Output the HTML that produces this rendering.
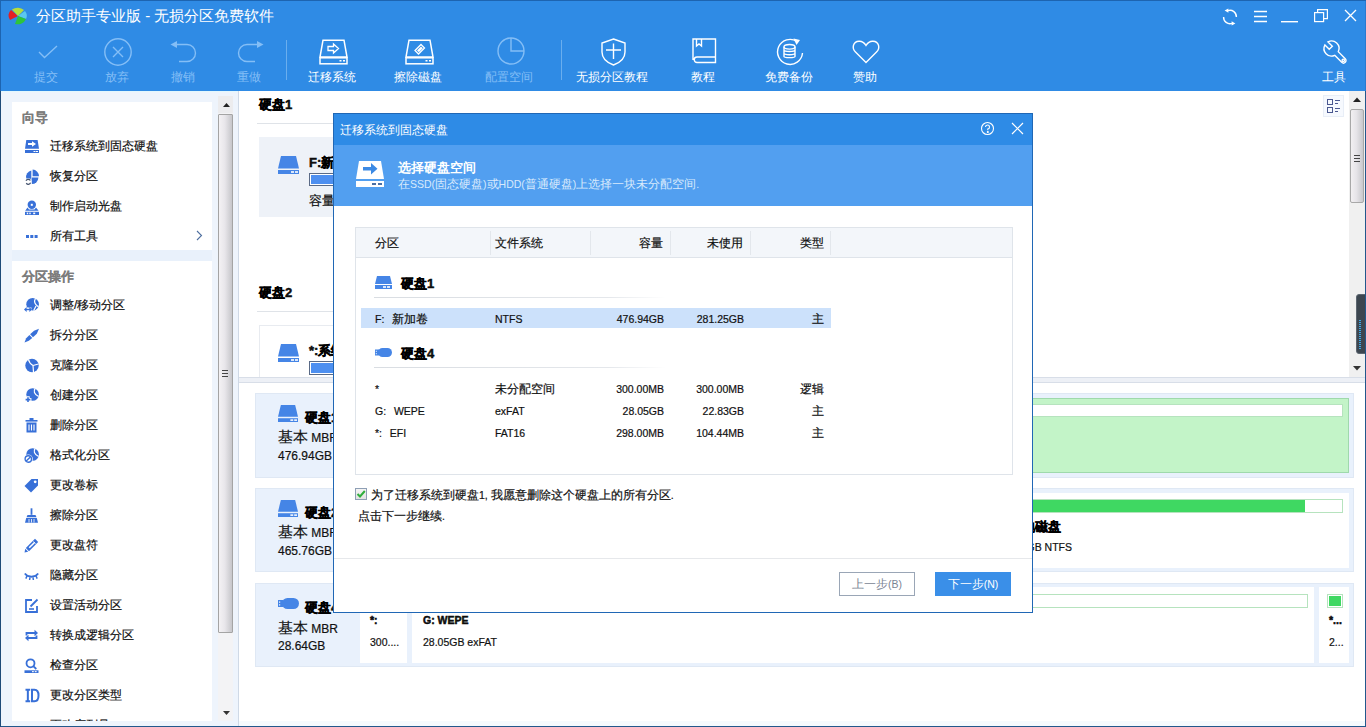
<!DOCTYPE html>
<html><head><meta charset="utf-8">
<style>
*{box-sizing:border-box;margin:0;padding:0}
html,body{width:1366px;height:727px;overflow:hidden;background:#fff;font-family:"Liberation Sans",sans-serif;font-size:12px;color:#111}
.a{position:absolute}
.tt{white-space:nowrap}
svg{position:absolute;overflow:visible}
</style></head><body>

<div class="a" style="left:0px;top:0px;width:1366px;height:91px;background:#2f8be5;"></div>
<svg style="left:8px;top:7px" width="20" height="18" viewBox="0 0 20 18">
<path d="M10 9 L3 3 A9 8 0 0 0 2 13 Z" fill="#e41e22"/>
<path d="M10 9 L4 2.5 A9 8 0 0 1 16 3 Z" fill="#b5dc3c"/>
<path d="M10 9 L17 4 A9 8 0 0 1 18 12 Z" fill="#5bc8f0"/>
<path d="M10 9 L18 12 A9 8 0 0 1 7 17 Z" fill="#2ec43c"/>
</svg>
<div class="a tt" style="left:36px;top:7px;font-size:15px;line-height:18px;color:#fff">分区助手专业版 - 无损分区免费软件</div>
<svg style="left:1222px;top:9px" width="16" height="16" viewBox="0 0 16 16" fill="none" stroke="#fff" stroke-width="1.4">
<path d="M6 1.6A6.4 6.4 0 0 1 14.4 8"/><path d="M2.6 1.6L6.4 -0.6V3.8Z" fill="#fff" stroke="none"/>
<path d="M1.6 8A6.4 6.4 0 0 0 10 14.4"/><path d="M13.4 14.4L9.6 12.2V16.6Z" fill="#fff" stroke="none"/></svg>
<svg style="left:1254px;top:11px" width="13" height="11" viewBox="0 0 13 11" fill="none" stroke="#fff" stroke-width="1.3"><path d="M0 0.5H13M0 5.5H13M0 10.5H13"/></svg>
<svg style="left:1281px;top:21px" width="17" height="2" viewBox="0 0 17 2"><rect width="17" height="1.4" fill="#fff"/></svg>
<svg style="left:1314px;top:9px" width="14" height="13" viewBox="0 0 14 13" fill="none" stroke="#fff" stroke-width="1.2"><rect x="0.6" y="3.6" width="9" height="9"/><path d="M3.6 3.6V0.6H13.4V9.6H9.6"/></svg>
<svg style="left:1345px;top:10px" width="11" height="11" viewBox="0 0 11 11" fill="none" stroke="#fff" stroke-width="1.3"><path d="M0 0L11 11M11 0L0 11"/></svg>

<svg style="left:38px;top:45px" width="20" height="14" viewBox="0 0 20 14" fill="none" stroke="#84bef6" stroke-width="1.4"><path d="M1 7L6.5 12.5L19 1"/></svg>
<svg style="left:104px;top:38px" width="28" height="28" viewBox="0 0 28 28" fill="none" stroke="#84bef6" stroke-width="1.4"><circle cx="14" cy="14" r="13.2"/><path d="M9 9L19 19M19 9L9 19"/></svg>
<svg style="left:170px;top:41px" width="28" height="22" viewBox="0 0 28 22" fill="none" stroke="#84bef6" stroke-width="1.4"><path d="M6 3.5H17A8.5 8.5 0 0 1 17 20.5H9"/><path d="M0.5 3.5L7 0V7Z" fill="#84bef6" stroke="none"/></svg>
<svg style="left:236px;top:41px" width="28" height="22" viewBox="0 0 28 22" fill="none" stroke="#84bef6" stroke-width="1.4"><path d="M22 3.5H11A8.5 8.5 0 0 0 11 20.5H19"/><path d="M27.5 3.5L21 0V7Z" fill="#84bef6" stroke="none"/></svg>
<svg style="left:319px;top:39px" width="29" height="26" viewBox="0 0 29 26" fill="none" stroke="#fff" stroke-width="1.5">
<path d="M4 1.2H25L28 18H1Z"/><rect x="1" y="18.8" width="27" height="6"/>
<path d="M20.5 21.8H22.5M24 21.8H26" stroke-width="1.6"/>
<path d="M9 7.5H14.5V5L19.5 9.5L14.5 14V11.5H9Z" stroke-width="1.3"/></svg>
<svg style="left:405px;top:39px" width="29" height="26" viewBox="0 0 29 26" fill="none" stroke="#fff" stroke-width="1.5">
<path d="M4 1.2H25L28 18H1Z"/><rect x="1" y="18.8" width="27" height="6"/>
<path d="M20.5 21.8H22.5M24 21.8H26" stroke-width="1.6"/>
<path d="M10 11.5L16 5.5L19.5 9L13.5 15Z" stroke-width="1.3"/><path d="M12 11.5L16 7.5L17.8 9.3L13.8 13.3Z" fill="#fff" stroke="none"/></svg>
<svg style="left:497px;top:37px" width="28" height="28" viewBox="0 0 28 28" fill="none" stroke="#84bef6" stroke-width="1.4"><circle cx="14" cy="14" r="13"/><path d="M14 1V14H27"/></svg>
<svg style="left:601px;top:38px" width="25" height="28" viewBox="0 0 25 28" fill="none" stroke="#fff" stroke-width="1.4">
<path d="M12.5 1L24 5V14C24 21 18 25 12.5 27C7 25 1 21 1 14V5Z"/><path d="M5 12H20M12.5 5.5V21"/></svg>
<svg style="left:692px;top:38px" width="25" height="26" viewBox="0 0 25 26" fill="none" stroke="#fff" stroke-width="1.4">
<path d="M1 22V1H23.5V24.5H5A2.75 2.75 0 0 1 5 19H23.5"/><path d="M4.5 1V8L7 6L9.5 8V1"/></svg>
<svg style="left:775px;top:37px" width="30" height="29" viewBox="0 0 30 29" fill="none" stroke="#fff" stroke-width="1.4">
<path d="M22 4.5A12.5 12.5 0 1 0 27.5 16"/><path d="M18.5 1.5L25 3L21.5 8Z" fill="#fff" stroke="none"/>
<ellipse cx="14.5" cy="9.8" rx="5.5" ry="2.3"/><path d="M9 9.8V19.5C9 21 20 21 20 19.5V9.8M9 13C9 15 20 15 20 13M9 16.3C9 18.2 20 18.2 20 16.3"/></svg>
<svg style="left:852px;top:40px" width="28" height="24" viewBox="0 0 28 24" fill="none" stroke="#fff" stroke-width="1.4">
<path d="M14 22.5L3.5 12C-0.5 8 1 1.5 7 1.2C10 1 12.5 3 14 5.5C15.5 3 18 1 21 1.2C27 1.5 28.5 8 24.5 12Z"/></svg>
<svg style="left:1323px;top:40px" width="25" height="25" viewBox="0 0 25 25" fill="none" stroke="#fff" stroke-width="1.4">
<path d="M11.73 15.27L18.73 22.27A2.5 2.5 0 0 0 22.27 18.73L15.27 11.73A7.5 7.5 0 0 0 4.99 1.87L9.35 6.24L6.24 9.35L1.87 4.99A7.5 7.5 0 0 0 11.73 15.27Z"/>
<circle cx="20.3" cy="20.3" r="1.2"/></svg>

<div class="a" style="left:286px;top:40px;width:1px;height:40px;background:#6aaeee;"></div>
<div class="a" style="left:561px;top:40px;width:1px;height:40px;background:#6aaeee;"></div>
<div class="a tt" style="left:-54px;width:200px;text-align:center;top:70px;font-size:12px;line-height:14px;color:#84bef6">提交</div>
<div class="a tt" style="left:17px;width:200px;text-align:center;top:70px;font-size:12px;line-height:14px;color:#84bef6">放弃</div>
<div class="a tt" style="left:83px;width:200px;text-align:center;top:70px;font-size:12px;line-height:14px;color:#84bef6">撤销</div>
<div class="a tt" style="left:149px;width:200px;text-align:center;top:70px;font-size:12px;line-height:14px;color:#84bef6">重做</div>
<div class="a tt" style="left:232px;width:200px;text-align:center;top:70px;font-size:12px;line-height:14px;color:#fff">迁移系统</div>
<div class="a tt" style="left:318px;width:200px;text-align:center;top:70px;font-size:12px;line-height:14px;color:#fff">擦除磁盘</div>
<div class="a tt" style="left:409px;width:200px;text-align:center;top:70px;font-size:12px;line-height:14px;color:#84bef6">配置空间</div>
<div class="a tt" style="left:512px;width:200px;text-align:center;top:70px;font-size:12px;line-height:14px;color:#fff">无损分区教程</div>
<div class="a tt" style="left:603px;width:200px;text-align:center;top:70px;font-size:12px;line-height:14px;color:#fff">教程</div>
<div class="a tt" style="left:689px;width:200px;text-align:center;top:70px;font-size:12px;line-height:14px;color:#fff">免费备份</div>
<div class="a tt" style="left:765px;width:200px;text-align:center;top:70px;font-size:12px;line-height:14px;color:#fff">赞助</div>
<div class="a tt" style="left:1234px;width:200px;text-align:center;top:70px;font-size:12px;line-height:14px;color:#fff">工具</div>
<div class="a" style="left:0px;top:91px;width:239px;height:636px;background:#eef4fc;"></div>
<div class="a" style="left:12px;top:250px;width:200px;height:11px;background:#e9f1fb;"></div>
<div class="a" style="left:1px;top:91px;width:237px;height:1px;background:#e2f8fe;"></div>
<div class="a" style="left:12px;top:102px;width:200px;height:148px;background:#fff;"></div>
<div class="a" style="left:12px;top:261px;width:200px;height:460px;background:#fff;"></div>
<div class="a tt" style="left:22px;top:110px;font-size:13px;line-height:15px;color:#7c7c7c;font-weight:bold;-webkit-text-stroke:0.1px #7c7c7c">向导</div>
<div class="a tt" style="left:22px;top:269px;font-size:13px;line-height:15px;color:#7c7c7c;font-weight:bold;-webkit-text-stroke:0.1px #7c7c7c">分区操作</div>
<svg style="left:24px;top:138.5px" width="15" height="15" viewBox="0 0 15 15" fill="#3870d8"><path d="M2.3 1H13.6L15 9.7H1Z"/><rect x="1" y="11" width="14" height="3"/><path d="M4 4H8V2.2L12 5L8 7.8V6H4Z" fill="#fff"/><rect x="9.5" y="12" width="2" height="1" fill="#fff"/><rect x="12" y="12" width="2" height="1" fill="#fff"/></svg>
<div class="a tt" style="left:50px;top:139px;font-size:12px;line-height:14px;color:#111;-webkit-text-stroke:0.2px #111">迁移系统到固态硬盘</div>
<svg style="left:24px;top:168.5px" width="15" height="15" viewBox="0 0 15 15" fill="#3870d8"><path d="M7.3 1.6A6.6 6.6 0 0 0 2.2 9.2H7.3Z"/><path d="M8.6 0.6A6.6 6.6 0 0 1 15 7.3H8.6Z"/><path d="M14.4 8.6A6.6 6.6 0 0 1 7.8 15V8.6Z"/><path d="M2.2 9.2H7.3V14Z"/><circle cx="4.3" cy="12.8" r="3.3" fill="#fff"/><path d="M2 11.8A2.4 2.4 0 0 1 6.3 11.5M6.6 13.8A2.4 2.4 0 0 1 2.3 14.1" fill="none" stroke="#44536e" stroke-width="1.2"/></svg>
<div class="a tt" style="left:50px;top:169px;font-size:12px;line-height:14px;color:#111;-webkit-text-stroke:0.2px #111">恢复分区</div>
<svg style="left:24px;top:198.5px" width="15" height="15" viewBox="0 0 15 15" fill="#3870d8"><circle cx="7.8" cy="5.8" r="4.2"/><rect x="6.8" y="4.8" width="2" height="2" fill="#fff"/><path d="M1.2 11.8L3.5 8.5L5 10.5H10.5L12 8.5L14.6 11.8Z"/><rect x="1" y="12.8" width="14" height="3.2"/><rect x="2.8" y="13.6" width="1.4" height="1.6" fill="#fff"/><rect x="5.3" y="13.6" width="1.4" height="1.6" fill="#fff"/><rect x="9.2" y="13.6" width="2" height="1.6" fill="#fff"/></svg>
<div class="a tt" style="left:50px;top:199px;font-size:12px;line-height:14px;color:#111;-webkit-text-stroke:0.2px #111">制作启动光盘</div>
<svg style="left:24px;top:228.5px" width="15" height="15" viewBox="0 0 15 15" fill="#3870d8"><rect x="2" y="6" width="3" height="3"/><rect x="6.3" y="6" width="3" height="3"/><rect x="10.6" y="6" width="3" height="3"/></svg>
<div class="a tt" style="left:50px;top:229px;font-size:12px;line-height:14px;color:#111;-webkit-text-stroke:0.2px #111">所有工具</div>
<svg style="left:196px;top:230px" width="7" height="11" viewBox="0 0 7 11" fill="none" stroke="#4f6f9f" stroke-width="1.1"><path d="M1 1L5.5 5.5L1 10"/></svg>
<svg style="left:24px;top:297.5px" width="15" height="15" viewBox="0 0 15 15" fill="#3870d8"><circle cx="8.6" cy="6.3" r="6.3"/><path d="M11.5 0.3C10 3 10 6 14.5 9M9.7 12.6L12 8" fill="none" stroke="#fff" stroke-width="1.2"/><path d="M0.5 11.5H7.5" stroke="#fff" stroke-width="4"/><path d="M1.5 11.5H6.5" stroke="#3870d8" stroke-width="1.4"/><path d="M0 11.5L2.6 9V14Z"/><path d="M8 11.5L5.4 9V14Z"/></svg>
<div class="a tt" style="left:50px;top:298px;font-size:12px;line-height:14px;color:#111;-webkit-text-stroke:0.2px #111">调整/移动分区</div>
<svg style="left:24px;top:327.5px" width="15" height="15" viewBox="0 0 15 15" fill="#3870d8"><path d="M15 0.8L12.8 5.8L9 9.2L6.1 6.3L10 2.8Z"/><path d="M5.4 7L8.3 9.9L4.8 12.8L0.5 14.6L2.2 10.3Z"/></svg>
<div class="a tt" style="left:50px;top:328px;font-size:12px;line-height:14px;color:#111;-webkit-text-stroke:0.2px #111">拆分分区</div>
<svg style="left:24px;top:357.5px" width="15" height="15" viewBox="0 0 15 15" fill="#3870d8"><circle cx="8" cy="7.5" r="6.7"/><path d="M4.5 1.6C5 4 6.5 6 9 7.5M9 7.5L14.5 6M9 7.5L9.5 14.2" fill="none" stroke="#fff" stroke-width="1.2"/></svg>
<div class="a tt" style="left:50px;top:358px;font-size:12px;line-height:14px;color:#111;-webkit-text-stroke:0.2px #111">克隆分区</div>
<svg style="left:24px;top:387.5px" width="15" height="15" viewBox="0 0 15 15" fill="#3870d8"><circle cx="8.6" cy="6.5" r="6.3"/><path d="M11 0.6C9.5 3 9.8 6 14.6 8.5" fill="none" stroke="#fff" stroke-width="1.2"/><path d="M4 8.2V15M0.6 11.6H7.4" stroke="#fff" stroke-width="3.4"/><path d="M4 9.3V14M1.6 11.6H6.4" stroke="#3870d8" stroke-width="1.6"/></svg>
<div class="a tt" style="left:50px;top:388px;font-size:12px;line-height:14px;color:#111;-webkit-text-stroke:0.2px #111">创建分区</div>
<svg style="left:24px;top:417.5px" width="15" height="15" viewBox="0 0 15 15" fill="#3870d8"><rect x="1.5" y="2" width="12" height="1.6"/><rect x="5.5" y="0" width="4" height="2.2"/><path d="M2.5 4.5H12.5V14.5H2.5Z"/><path d="M5 6.5V12.5M7.5 6.5V12.5M10 6.5V12.5" stroke="#fff" stroke-width="1.1"/></svg>
<div class="a tt" style="left:50px;top:418px;font-size:12px;line-height:14px;color:#111;-webkit-text-stroke:0.2px #111">删除分区</div>
<svg style="left:24px;top:447.5px" width="15" height="15" viewBox="0 0 15 15" fill="#3870d8"><circle cx="8.6" cy="6.5" r="6.3"/><path d="M11 0.6C9.5 3 9.8 6 14.6 8.5" fill="none" stroke="#fff" stroke-width="1.2"/><circle cx="4.3" cy="11" r="4.5" fill="#fff"/><circle cx="4.3" cy="11" r="3.2" fill="none" stroke="#3870d8" stroke-width="1.4"/><path d="M2.2 13.1L6.4 8.9" stroke="#3870d8" stroke-width="1.4"/></svg>
<div class="a tt" style="left:50px;top:448px;font-size:12px;line-height:14px;color:#111;-webkit-text-stroke:0.2px #111">格式化分区</div>
<svg style="left:24px;top:477.5px" width="15" height="15" viewBox="0 0 15 15" fill="#3870d8"><path d="M7.5 1H14V7.5L7 14.5L0.5 8Z"/><circle cx="11.2" cy="3.8" r="1.4" fill="#fff"/></svg>
<div class="a tt" style="left:50px;top:478px;font-size:12px;line-height:14px;color:#111;-webkit-text-stroke:0.2px #111">更改卷标</div>
<svg style="left:24px;top:507.5px" width="15" height="15" viewBox="0 0 15 15" fill="#3870d8"><rect x="6.6" y="0.3" width="1.8" height="6.5"/><path d="M3.5 7H11.5L12.5 9.3H2.5Z"/><path d="M2.2 10H12.8L14 14.8H1Z"/><path d="M5 11V14.5M7.5 11V14.5M10 11V14.5" stroke="#fff" stroke-width="0.8"/></svg>
<div class="a tt" style="left:50px;top:508px;font-size:12px;line-height:14px;color:#111;-webkit-text-stroke:0.2px #111">擦除分区</div>
<svg style="left:24px;top:537.5px" width="15" height="15" viewBox="0 0 15 15" fill="#3870d8"><path d="M11 0.8L14.2 4L5 13.2L1.8 10Z"/><path d="M1.3 10.8L4.2 13.7L0.5 14.5Z"/><path d="M5.2 9.8L10.5 4.5" stroke="#fff" stroke-width="1.6"/><path d="M11.5 5.5L9.5 3.5" stroke="#fff" stroke-width="0.9"/></svg>
<div class="a tt" style="left:50px;top:538px;font-size:12px;line-height:14px;color:#111;-webkit-text-stroke:0.2px #111">更改盘符</div>
<svg style="left:24px;top:567.5px" width="15" height="15" viewBox="0 0 15 15" fill="#3870d8"><path d="M0.8 5.5C4 9.8 11 9.8 14.2 5.5" fill="none" stroke="#3870d8" stroke-width="1.8"/><path d="M3 8L1.8 10.6M6 9.3L5.6 12M9 9.3L9.4 12M12 8L13.2 10.6" stroke="#3870d8" stroke-width="1.5"/></svg>
<div class="a tt" style="left:50px;top:568px;font-size:12px;line-height:14px;color:#111;-webkit-text-stroke:0.2px #111">隐藏分区</div>
<svg style="left:24px;top:597.5px" width="15" height="15" viewBox="0 0 15 15" fill="#3870d8"><path d="M8 2H2V14H13V8" fill="none" stroke="#3870d8" stroke-width="1.8"/><path d="M6.5 8.5L13.5 1.5" stroke="#3870d8" stroke-width="1.8"/><path d="M5 11H10" stroke="#3870d8" stroke-width="1.6"/></svg>
<div class="a tt" style="left:50px;top:598px;font-size:12px;line-height:14px;color:#111;-webkit-text-stroke:0.2px #111">设置活动分区</div>
<svg style="left:24px;top:627.5px" width="15" height="15" viewBox="0 0 15 15" fill="#3870d8"><path d="M2.5 7.5V5H11" fill="none" stroke="#3870d8" stroke-width="1.8"/><path d="M10.5 1.8L14 5L10.5 8.2Z"/><path d="M12.5 7.5V10H4" fill="none" stroke="#3870d8" stroke-width="1.8"/><path d="M4.5 6.8L1 10L4.5 13.2Z"/></svg>
<div class="a tt" style="left:50px;top:628px;font-size:12px;line-height:14px;color:#111;-webkit-text-stroke:0.2px #111">转换成逻辑分区</div>
<svg style="left:24px;top:657.5px" width="15" height="15" viewBox="0 0 15 15" fill="#3870d8"><circle cx="6.5" cy="5.3" r="4" fill="none" stroke="#3870d8" stroke-width="1.8"/><path d="M9.3 8.1L12.3 11" stroke="#3870d8" stroke-width="1.8"/><rect x="0.5" y="12.3" width="14" height="2.7"/><rect x="8" y="13.1" width="1.8" height="1.1" fill="#fff"/><rect x="10.8" y="13.1" width="1.8" height="1.1" fill="#fff"/></svg>
<div class="a tt" style="left:50px;top:658px;font-size:12px;line-height:14px;color:#111;-webkit-text-stroke:0.2px #111">检查分区</div>
<svg style="left:24px;top:687.5px" width="15" height="15" viewBox="0 0 15 15" fill="#3870d8"><path d="M1.5 1.8H6.2M3.85 1.8V13.2M1.5 13.2H6.2" stroke="#3870d8" stroke-width="2"/><path d="M8 1.8H10.5C13.5 1.8 14.5 4.5 14.5 7.5C14.5 10.5 13.5 13.2 10.5 13.2H8Z" fill="none" stroke="#3870d8" stroke-width="2"/></svg>
<div class="a tt" style="left:50px;top:688px;font-size:12px;line-height:14px;color:#111;-webkit-text-stroke:0.2px #111">更改分区类型</div>
<svg style="left:24px;top:717.5px" width="15" height="15" viewBox="0 0 15 15" fill="#3870d8"><rect x="0.5" y="6" width="14" height="3"/></svg>
<div class="a tt" style="left:50px;top:718px;font-size:12px;line-height:14px;color:#111;-webkit-text-stroke:0.2px #111">更改序列号</div>
<div class="a" style="left:0px;top:721px;width:239px;height:6px;background:#eef4fc;"></div>
<div class="a" style="left:218px;top:96px;width:15px;height:625px;background:#f3f3f5;"></div>
<div class="a" style="left:218px;top:96px;width:15px;height:17px;background:#ececee;"></div>
<div class="a" style="left:218px;top:114px;width:15px;height:519px;background:linear-gradient(90deg,#f4f2f4,#e8e6ea 45%,#c6c6ca);border:1px solid #a4a4a4;border-radius:1px"></div>
<svg style="left:223px;top:103px" width="7" height="4" viewBox="0 0 7 4"><path d="M0 4L3.5 0L7 4Z" fill="#222"/></svg>
<svg style="left:223px;top:711px" width="7" height="4" viewBox="0 0 7 4"><path d="M0 0L3.5 4L7 0Z" fill="#333"/></svg>
<div class="a" style="left:222px;top:370px;width:6px;height:1px;background:#444;box-shadow:0 3px 0 #444,0 6px 0 #444"></div>
<div class="a" style="left:238px;top:91px;width:1px;height:635px;background:#cfd9e6;"></div>
<div class="a" style="left:239px;top:91px;width:1110px;height:286px;background:#fff;"></div>
<div class="a tt" style="left:259px;top:97px;font-size:13px;line-height:15px;color:#111;font-weight:bold;-webkit-text-stroke:0.45px #000">硬盘1</div>
<div class="a" style="left:257px;top:123px;width:700px;height:1px;background:#dfe3e8;"></div>
<div class="a" style="left:259px;top:137px;width:700px;height:80px;background:#eef2f8;"></div>
<svg style="left:278px;top:156px" width="21" height="18" viewBox="0 0 21 18" preserveAspectRatio="none"><path d="M3 0H18L21 12.5H0Z" fill="#4585e6"/><rect x="0" y="14" width="21" height="4" fill="#4585e6"/><rect x="13" y="15.2" width="3" height="1.6" fill="#fff"/><rect x="17" y="15.2" width="3" height="1.6" fill="#fff"/></svg>
<div class="a tt" style="left:309px;top:155px;font-size:13px;line-height:15px;color:#111;font-weight:bold;-webkit-text-stroke:0.45px #000">F:新加卷</div>
<div class="a" style="left:309px;top:173px;width:200px;height:13px;border:1px solid #5a6a86;background:#fff"><div style="position:absolute;left:1px;top:1px;width:120px;height:9px;background:#4d8ff0"></div></div>
<div class="a tt" style="left:309px;top:193px;font-size:13px;line-height:15px;color:#111;-webkit-text-stroke:0.2px #111">容量</div>
<div class="a tt" style="left:259px;top:285px;font-size:13px;line-height:15px;color:#111;font-weight:bold;-webkit-text-stroke:0.45px #000">硬盘2</div>
<div class="a" style="left:257px;top:311px;width:700px;height:1px;background:#dfe3e8;"></div>
<div class="a" style="left:259px;top:325px;width:700px;height:60px;background:#fff;border:1px solid #e8ebf0"></div>
<svg style="left:278px;top:344px" width="21" height="18" viewBox="0 0 21 18" preserveAspectRatio="none"><path d="M3 0H18L21 12.5H0Z" fill="#4585e6"/><rect x="0" y="14" width="21" height="4" fill="#4585e6"/><rect x="13" y="15.2" width="3" height="1.6" fill="#fff"/><rect x="17" y="15.2" width="3" height="1.6" fill="#fff"/></svg>
<div class="a tt" style="left:309px;top:343px;font-size:13px;line-height:15px;color:#111;font-weight:bold;-webkit-text-stroke:0.45px #000">*:系统保留</div>
<div class="a" style="left:309px;top:361px;width:200px;height:14px;border:1px solid #5a6a86;background:#fff"><div style="position:absolute;left:1px;top:1px;width:120px;height:10px;background:#4d8ff0"></div></div>
<div class="a" style="left:1323px;top:95px;width:21px;height:22px;background:#f6f9fe;border:1px solid #e8eef7"></div>
<svg style="left:1327px;top:99px" width="14" height="14" viewBox="0 0 14 14" fill="none" stroke="#4a5890" stroke-width="1"><rect x="0.5" y="0.5" width="5" height="5"/><rect x="0.5" y="8.5" width="5" height="5"/><path d="M8 1.5H13M8 4.5H11M8 9.5H13M8 12.5H11"/></svg>
<div class="a" style="left:1349px;top:91px;width:16px;height:286px;background:#f0f0f0;"></div>
<div class="a" style="left:1350px;top:109px;width:14px;height:94px;background:linear-gradient(90deg,#f2f0f2,#e6e4e8 45%,#c8c8cc);border:1px solid #a8a8a8;border-radius:2px"></div>
<svg style="left:1353px;top:97px" width="8" height="5" viewBox="0 0 8 5"><path d="M0 5L4 0.5L8 5Z" fill="#222"/></svg>
<svg style="left:1353px;top:366px" width="8" height="5" viewBox="0 0 8 5"><path d="M0 0L4 4.5L8 0Z" fill="#333"/></svg>
<div class="a" style="left:1354px;top:155px;width:6px;height:1px;background:#444;box-shadow:0 3px 0 #444,0 6px 0 #444"></div>
<div class="a" style="left:1356px;top:294px;width:10px;height:60px;background:#3d4650;border-radius:3px 0 0 3px;border:1px solid #5c6670"></div>
<div class="a" style="left:1359px;top:320px;width:2px;height:30px;background:repeating-linear-gradient(180deg,#3aa8e8 0 1px,transparent 1px 2px);"></div>
<div class="a" style="left:239px;top:377px;width:1126px;height:6px;background:#edf0f6;border-top:1px solid #d8dee8;border-bottom:1px solid #d8dee8"></div>
<div class="a" style="left:239px;top:383px;width:1126px;height:338px;background:#fff;"></div>
<div class="a" style="left:255px;top:393px;width:1099px;height:85px;background:#e9f1fc;border:1px solid #dfe8f4"></div>
<div class="a" style="left:360px;top:398px;width:989px;height:75px;background:#c3f4c8;border:1px solid #9fd9ac"></div>
<div class="a" style="left:366px;top:404px;width:977px;height:13px;background:#fff;border:1px solid #b6e3be"></div>
<svg style="left:278px;top:405px" width="20" height="17" viewBox="0 0 21 18" preserveAspectRatio="none"><path d="M3 0H18L21 12.5H0Z" fill="#4585e6"/><rect x="0" y="14" width="21" height="4" fill="#4585e6"/><rect x="13" y="15.2" width="3" height="1.6" fill="#fff"/><rect x="17" y="15.2" width="3" height="1.6" fill="#fff"/></svg>
<div class="a tt" style="left:305px;top:410px;font-size:13px;line-height:15px;color:#111;font-weight:bold;-webkit-text-stroke:0.45px #000">硬盘1</div>
<div class="a tt" style="left:278px;top:428px;font-size:15px;line-height:17px;color:#111;-webkit-text-stroke:0.2px #111">基本<span style="font-size:12px"> MBR</span></div>
<div class="a tt" style="left:278px;top:449px;font-size:12px;line-height:15px;color:#111;-webkit-text-stroke:0.2px #111">476.94GB</div>
<div class="a" style="left:255px;top:488px;width:1099px;height:84px;background:#e9f1fc;border:1px solid #dfe8f4"></div>
<div class="a" style="left:360px;top:493px;width:989px;height:75px;background:#fff;"></div>
<div class="a" style="left:366px;top:499px;width:977px;height:14px;border:1px solid #b6e3be;background:#fff"><div style="position:absolute;left:0;top:0;width:938px;height:12px;background:#3fd862"></div></div>
<svg style="left:278px;top:500px" width="20" height="17" viewBox="0 0 21 18" preserveAspectRatio="none"><path d="M3 0H18L21 12.5H0Z" fill="#4585e6"/><rect x="0" y="14" width="21" height="4" fill="#4585e6"/><rect x="13" y="15.2" width="3" height="1.6" fill="#fff"/><rect x="17" y="15.2" width="3" height="1.6" fill="#fff"/></svg>
<div class="a tt" style="left:305px;top:505px;font-size:13px;line-height:15px;color:#111;font-weight:bold;-webkit-text-stroke:0.45px #000">硬盘2</div>
<div class="a tt" style="left:278px;top:523px;font-size:15px;line-height:17px;color:#111;-webkit-text-stroke:0.2px #111">基本<span style="font-size:12px"> MBR</span></div>
<div class="a tt" style="left:278px;top:544px;font-size:12px;line-height:15px;color:#111;-webkit-text-stroke:0.2px #111">465.76GB</div>
<div class="a tt" style="left:661px;width:400px;text-align:right;top:519px;font-size:13px;line-height:15px;color:#111;font-weight:bold;-webkit-text-stroke:0.45px #000">本地磁盘</div>
<div class="a tt" style="left:672px;width:400px;text-align:right;top:540px;font-size:12px;line-height:14px;color:#111;-webkit-text-stroke:0.2px #111"><span style="font-size:10.5px">465.76GB NTFS</span></div>
<div class="a" style="left:255px;top:583px;width:1099px;height:84px;background:#e9f1fc;border:1px solid #dfe8f4"></div>
<div class="a" style="left:360px;top:587px;width:47px;height:76px;background:#fff;"></div>
<div class="a" style="left:412px;top:587px;width:902px;height:76px;background:#fff;"></div>
<div class="a" style="left:1319px;top:587px;width:30px;height:76px;background:#fff;"></div>
<div class="a" style="left:418px;top:594px;width:890px;height:14px;background:#fff;border:1px solid #b6e3be"></div>
<div class="a" style="left:1327px;top:594px;width:16px;height:14px;border:1px solid #b6e3be;background:#fff"><div style="position:absolute;left:1px;top:1px;width:12px;height:10px;background:#3fd862"></div></div>
<svg style="left:278px;top:598px" width="21" height="11" viewBox="0 0 21 11" preserveAspectRatio="none"><rect x="4" y="0" width="17" height="11" rx="5.5" fill="#4585e6"/><rect x="0" y="2" width="5" height="7" fill="#4585e6"/><rect x="1" y="3.5" width="1.2" height="1.2" fill="#fff"/><rect x="1" y="6.3" width="1.2" height="1.2" fill="#fff"/></svg>
<div class="a tt" style="left:305px;top:600px;font-size:13px;line-height:15px;color:#111;font-weight:bold;-webkit-text-stroke:0.45px #000">硬盘4</div>
<div class="a tt" style="left:278px;top:619px;font-size:15px;line-height:17px;color:#111;-webkit-text-stroke:0.2px #111">基本<span style="font-size:12px"> MBR</span></div>
<div class="a tt" style="left:278px;top:639px;font-size:12px;line-height:15px;color:#111;-webkit-text-stroke:0.2px #111">28.64GB</div>
<div class="a tt" style="left:370px;top:613px;font-size:12px;line-height:14px;color:#111;font-weight:bold;-webkit-text-stroke:0.45px #000"><span style="font-size:10.5px">*:</span></div>
<div class="a tt" style="left:370px;top:635px;font-size:12px;line-height:14px;color:#111;-webkit-text-stroke:0.2px #111"><span style="font-size:10.5px">300....</span></div>
<div class="a tt" style="left:423px;top:613px;font-size:12px;line-height:14px;color:#111;font-weight:bold;-webkit-text-stroke:0.45px #000"><span style="font-size:10.5px">G: WEPE</span></div>
<div class="a tt" style="left:423px;top:635px;font-size:12px;line-height:14px;color:#111;-webkit-text-stroke:0.2px #111"><span style="font-size:10.5px">28.05GB exFAT</span></div>
<div class="a tt" style="left:1329px;top:613px;font-size:12px;line-height:14px;color:#111;font-weight:bold;-webkit-text-stroke:0.45px #000"><span style="font-size:10.5px">*...</span></div>
<div class="a tt" style="left:1329px;top:635px;font-size:12px;line-height:14px;color:#111;-webkit-text-stroke:0.2px #111"><span style="font-size:10.5px">2...</span></div>
<div class="a" style="left:239px;top:721px;width:1126px;height:5px;background:#f5fafe;"></div>
<div class="a" style="left:0px;top:726px;width:1366px;height:1px;background:#22588c;"></div>
<div class="a" style="left:0px;top:0px;width:1px;height:91px;background:#1d64b0;"></div>
<div class="a" style="left:0px;top:91px;width:1px;height:636px;background:#1e4a78;"></div>
<div class="a" style="left:1365px;top:0px;width:1px;height:91px;background:#2a7ad0;"></div>
<div class="a" style="left:1365px;top:91px;width:1px;height:636px;background:#22588c;"></div>
<div class="a" style="left:0px;top:0px;width:1366px;height:1px;background:#1d64b0;"></div>
<div class="a" style="left:333px;top:113px;width:700px;height:500px;background:#fff;border:1px solid #2067b5"></div>
<div class="a" style="left:334px;top:114px;width:698px;height:31px;background:#2e8be6;"></div>
<div class="a" style="left:334px;top:145px;width:698px;height:61px;background:#529ff0;"></div>
<div class="a tt" style="left:340px;top:123px;font-size:12px;line-height:14px;color:#fff">迁移系统到固态硬盘</div>
<svg style="left:981px;top:122px" width="13" height="13" viewBox="0 0 13 13" fill="none" stroke="#fff" stroke-width="1.1"><circle cx="6.5" cy="6.5" r="6"/><path d="M4.5 5A2 2 0 1 1 6.8 7V8.3"/><circle cx="6.8" cy="10" r="0.5" fill="#fff"/></svg>
<svg style="left:1012px;top:123px" width="11" height="11" viewBox="0 0 11 11" fill="none" stroke="#fff" stroke-width="1.2"><path d="M0 0L11 11M11 0L0 11"/></svg>
<svg style="left:356px;top:160px" width="28" height="27" viewBox="0 0 28 27"><path d="M3 1H25L28 19H0Z" fill="#fff"/><rect x="0" y="21" width="28" height="6" fill="#fff"/><rect x="16" y="23" width="4" height="2" fill="#4a6fa5"/><rect x="22" y="23" width="4" height="2" fill="#4a6fa5"/><path d="M7 7H15V3L21.5 8.75L15 14.5V10.5H7Z" fill="#3c8ae4"/></svg>
<div class="a tt" style="left:398px;top:160px;font-size:13px;line-height:15px;color:#fff;font-weight:bold">选择硬盘空间</div>
<div class="a tt" style="left:398px;top:177px;font-size:12px;line-height:14px;color:#d8eafc">在<span style="font-size:10.5px">SSD(</span>固态硬盘<span style="font-size:10.5px">)</span>或<span style="font-size:10.5px">HDD(</span>普通硬盘<span style="font-size:10.5px">)</span>上选择一块未分配空间<span style="font-size:10.5px">.</span></div>
<div class="a" style="left:355px;top:227px;width:658px;height:248px;background:#fff;border:1px solid #dfe4ea"></div>
<div class="a" style="left:356px;top:228px;width:656px;height:30px;background:#f3f6fa;border-bottom:1px solid #dfe4ea"></div>
<div class="a" style="left:490px;top:231px;width:1px;height:24px;background:#e3e7ec;"></div>
<div class="a" style="left:590px;top:231px;width:1px;height:24px;background:#e3e7ec;"></div>
<div class="a" style="left:670px;top:231px;width:1px;height:24px;background:#e3e7ec;"></div>
<div class="a" style="left:750px;top:231px;width:1px;height:24px;background:#e3e7ec;"></div>
<div class="a" style="left:830px;top:231px;width:1px;height:24px;background:#e3e7ec;"></div>
<div class="a tt" style="left:375px;top:236px;font-size:12px;line-height:14px;color:#111;-webkit-text-stroke:0.2px #111">分区</div>
<div class="a tt" style="left:495px;top:236px;font-size:12px;line-height:14px;color:#111;-webkit-text-stroke:0.2px #111">文件系统</div>
<div class="a tt" style="left:263px;width:400px;text-align:right;top:236px;font-size:12px;line-height:14px;color:#111;-webkit-text-stroke:0.2px #111">容量</div>
<div class="a tt" style="left:343px;width:400px;text-align:right;top:236px;font-size:12px;line-height:14px;color:#111;-webkit-text-stroke:0.2px #111">未使用</div>
<div class="a tt" style="left:424px;width:400px;text-align:right;top:236px;font-size:12px;line-height:14px;color:#111;-webkit-text-stroke:0.2px #111">类型</div>
<svg style="left:375px;top:276px" width="17" height="13" viewBox="0 0 17 13"><path d="M2 0H15L17 8H0Z" fill="#4585e6"/><rect x="0" y="9" width="17" height="4" fill="#4585e6"/><rect x="8" y="10.2" width="3" height="1.6" fill="#fff"/><rect x="12" y="10.2" width="3" height="1.6" fill="#fff"/></svg>
<div class="a tt" style="left:401px;top:276px;font-size:13px;line-height:15px;color:#111;font-weight:bold;-webkit-text-stroke:0.45px #000">硬盘1</div>
<div class="a" style="left:374px;top:297px;width:292px;height:1px;background:linear-gradient(90deg,#d9dde2,#e4e7eb 80%,#fff);"></div>
<div class="a" style="left:361px;top:308px;width:470px;height:20px;background:#cce1fb;"></div>
<div class="a tt" style="left:375px;top:312px;font-size:12px;line-height:14px;color:#111;-webkit-text-stroke:0.2px #111"><span style="font-size:10.5px">F:&nbsp; <span style="margin-left:2px"></span></span>新加卷</div>
<div class="a tt" style="left:495px;top:312px;font-size:12px;line-height:14px;color:#111;-webkit-text-stroke:0.2px #111"><span style="font-size:10.5px">NTFS</span></div>
<div class="a tt" style="left:264px;width:400px;text-align:right;top:312px;font-size:12px;line-height:14px;color:#111;-webkit-text-stroke:0.2px #111"><span style="font-size:10.5px">476.94GB</span></div>
<div class="a tt" style="left:344px;width:400px;text-align:right;top:312px;font-size:12px;line-height:14px;color:#111;-webkit-text-stroke:0.2px #111"><span style="font-size:10.5px">281.25GB</span></div>
<div class="a tt" style="left:424px;width:400px;text-align:right;top:312px;font-size:12px;line-height:14px;color:#111;-webkit-text-stroke:0.2px #111">主</div>
<svg style="left:375px;top:348px" width="17" height="9" viewBox="0 0 17 9"><rect x="3" y="0" width="14" height="9" rx="4.5" fill="#4585e6"/><rect x="0" y="1.5" width="4" height="6" fill="#4585e6"/><rect x="0.8" y="2.8" width="1" height="1" fill="#fff"/><rect x="0.8" y="5.2" width="1" height="1" fill="#fff"/></svg>
<div class="a tt" style="left:401px;top:346px;font-size:13px;line-height:15px;color:#111;font-weight:bold;-webkit-text-stroke:0.45px #000">硬盘4</div>
<div class="a" style="left:374px;top:367px;width:292px;height:1px;background:linear-gradient(90deg,#d9dde2,#e4e7eb 80%,#fff);"></div>
<div class="a tt" style="left:375px;top:382px;font-size:12px;line-height:14px;color:#111;-webkit-text-stroke:0.2px #111"><span style="font-size:10.5px">*</span></div>
<div class="a tt" style="left:495px;top:382px;font-size:12px;line-height:14px;color:#111;-webkit-text-stroke:0.2px #111">未分配空间</div>
<div class="a tt" style="left:264px;width:400px;text-align:right;top:382px;font-size:12px;line-height:14px;color:#111;-webkit-text-stroke:0.2px #111"><span style="font-size:10.5px">300.00MB</span></div>
<div class="a tt" style="left:344px;width:400px;text-align:right;top:382px;font-size:12px;line-height:14px;color:#111;-webkit-text-stroke:0.2px #111"><span style="font-size:10.5px">300.00MB</span></div>
<div class="a tt" style="left:424px;width:400px;text-align:right;top:382px;font-size:12px;line-height:14px;color:#111;-webkit-text-stroke:0.2px #111">逻辑</div>
<div class="a tt" style="left:375px;top:404px;font-size:12px;line-height:14px;color:#111;-webkit-text-stroke:0.2px #111"><span style="font-size:10.5px">G:&nbsp; <span style="margin-left:2px"></span>WEPE</span></div>
<div class="a tt" style="left:495px;top:404px;font-size:12px;line-height:14px;color:#111;-webkit-text-stroke:0.2px #111"><span style="font-size:10.5px">exFAT</span></div>
<div class="a tt" style="left:264px;width:400px;text-align:right;top:404px;font-size:12px;line-height:14px;color:#111;-webkit-text-stroke:0.2px #111"><span style="font-size:10.5px">28.05GB</span></div>
<div class="a tt" style="left:344px;width:400px;text-align:right;top:404px;font-size:12px;line-height:14px;color:#111;-webkit-text-stroke:0.2px #111"><span style="font-size:10.5px">22.83GB</span></div>
<div class="a tt" style="left:424px;width:400px;text-align:right;top:404px;font-size:12px;line-height:14px;color:#111;-webkit-text-stroke:0.2px #111">主</div>
<div class="a tt" style="left:375px;top:426px;font-size:12px;line-height:14px;color:#111;-webkit-text-stroke:0.2px #111"><span style="font-size:10.5px">*:&nbsp; <span style="margin-left:2px"></span>EFI</span></div>
<div class="a tt" style="left:495px;top:426px;font-size:12px;line-height:14px;color:#111;-webkit-text-stroke:0.2px #111"><span style="font-size:10.5px">FAT16</span></div>
<div class="a tt" style="left:264px;width:400px;text-align:right;top:426px;font-size:12px;line-height:14px;color:#111;-webkit-text-stroke:0.2px #111"><span style="font-size:10.5px">298.00MB</span></div>
<div class="a tt" style="left:344px;width:400px;text-align:right;top:426px;font-size:12px;line-height:14px;color:#111;-webkit-text-stroke:0.2px #111"><span style="font-size:10.5px">104.44MB</span></div>
<div class="a tt" style="left:424px;width:400px;text-align:right;top:426px;font-size:12px;line-height:14px;color:#111;-webkit-text-stroke:0.2px #111">主</div>
<div class="a" style="left:355px;top:488px;width:12px;height:12px;background:linear-gradient(#f4f4f4,#e2e2e2);border:1px solid #8e9fb5"></div>
<svg style="left:356px;top:489px" width="10" height="10" viewBox="0 0 10 10" fill="none" stroke="#2fae3c" stroke-width="2"><path d="M1.5 5L4 7.5L8.8 2"/></svg>
<div class="a tt" style="left:371px;top:488px;font-size:12px;line-height:14px;color:#111;-webkit-text-stroke:0.2px #111">为了迁移系统到硬盘<span style="font-size:10.5px">1, </span>我愿意删除这个硬盘上的所有分区<span style="font-size:10.5px">.</span></div>
<div class="a tt" style="left:358px;top:509px;font-size:12px;line-height:14px;color:#111;-webkit-text-stroke:0.2px #111">点击下一步继续<span style="font-size:10.5px">.</span></div>
<div class="a" style="left:334px;top:558px;width:698px;height:1px;background:#e6e8eb;"></div>
<div class="a" style="left:839px;top:572px;width:76px;height:24px;border:1px solid #9aa6b6;background:#fff;color:#7a8594;font-size:12px;line-height:22px;text-align:center">上一步<span style="font-size:10.5px">(B)</span></div>
<div class="a" style="left:935px;top:572px;width:76px;height:24px;background:#3a8fe8;color:#fff;font-size:12px;line-height:24px;text-align:center">下一步<span style="font-size:10.5px">(N)</span></div>
</body></html>
